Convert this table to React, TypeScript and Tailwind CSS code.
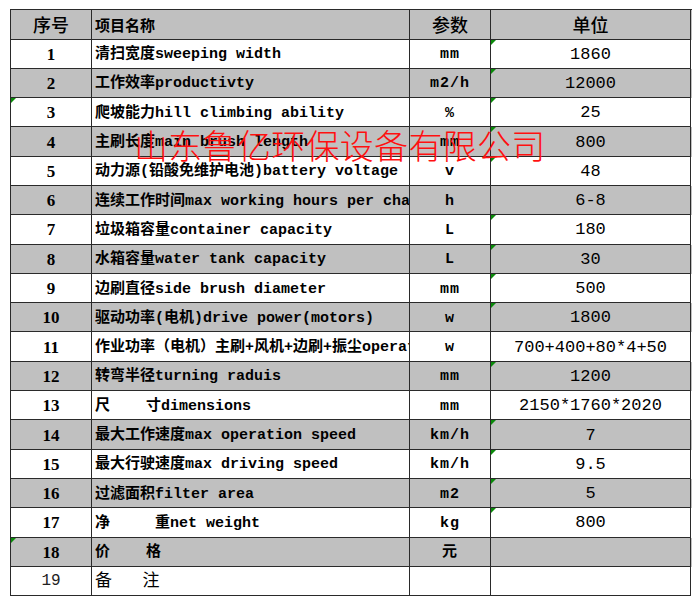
import React from "react";

type Row = {
  no: string;
  name: string;
  unit: string;
  value: string;
  markNo?: boolean;
  markValue?: boolean;
};

const rows: Row[] = [
  { no: "1", name: "清扫宽度sweeping width", unit: "mm", value: "1860", markValue: true },
  { no: "2", name: "工作效率productivty", unit: "m2/h", value: "12000", markValue: true },
  { no: "3", name: "爬坡能力hill climbing ability", unit: "%", value: "25", markNo: true, markValue: true },
  { no: "4", name: "主刷长度main brush length", unit: "mm", value: "800", markValue: true },
  { no: "5", name: "动力源(铅酸免维护电池)battery voltage", unit: "v", value: "48", markValue: true },
  { no: "6", name: "连续工作时间max working hours per charge", unit: "h", value: "6-8" },
  { no: "7", name: "垃圾箱容量container capacity", unit: "L", value: "180", markValue: true },
  { no: "8", name: "水箱容量water tank capacity", unit: "L", value: "30", markValue: true },
  { no: "9", name: "边刷直径side brush diameter", unit: "mm", value: "500", markValue: true },
  { no: "10", name: "驱动功率(电机)drive power(motors)", unit: "w", value: "1800", markValue: true },
  { no: "11", name: "作业功率（电机）主刷+风机+边刷+振尘operating power", unit: "w", value: "700+400+80*4+50" },
  { no: "12", name: "转弯半径turning raduis", unit: "mm", value: "1200", markValue: true },
  { no: "13", name: "尺    寸dimensions", unit: "mm", value: "2150*1760*2020" },
  { no: "14", name: "最大工作速度max operation speed", unit: "km/h", value: "7", markValue: true },
  { no: "15", name: "最大行驶速度max driving speed", unit: "km/h", value: "9.5", markValue: true },
  { no: "16", name: "过滤面积filter area", unit: "m2", value: "5", markValue: true },
  { no: "17", name: "净     重net weight", unit: "kg", value: "800", markValue: true },
  { no: "18", name: "价    格", unit: "元", value: "", markNo: true },
];

const mono = "font-['Liberation_Mono','Noto_Sans_CJK_SC',monospace]";
const cjk = "font-['Noto_Sans_CJK_SC','Liberation_Sans',sans-serif]";

function Mark() {
  return (
    <span className="absolute left-0 top-0 h-0 w-0 border-r-[5px] border-t-[5px] border-r-transparent border-t-[#0a8a0a]" />
  );
}

function Cell({
  children,
  className = "",
  mark,
}: {
  children?: React.ReactNode;
  className?: string;
  mark?: boolean;
}) {
  return (
    <div
      className={`relative flex items-center overflow-hidden whitespace-pre border-b border-r border-[#2a2a2a] leading-none ${className}`}
    >
      {mark && <Mark />}
      {children}
    </div>
  );
}

export default function App() {
  return (
    <div className="h-[605px] w-[700px] bg-white pl-[10px] pt-[9px] text-black">
      <div className="relative w-[682px] border-l border-t border-[#2a2a2a]">
        {/* header */}
        <div className="grid h-[29.5px] grid-cols-[81px_318px_81px_200px] bg-[#c0c0c0]">
          <Cell className={`justify-center text-[18px] font-medium ${cjk}`}>序号</Cell>
          <Cell className={`pl-[3px] text-[15px] font-bold ${cjk}`}>项目名称</Cell>
          <Cell className={`justify-center text-[18px] font-medium ${cjk}`}>参数</Cell>
          <Cell className={`justify-center text-[18px] font-medium ${cjk}`}>单位</Cell>
        </div>

        {rows.map((r, i) => (
          <div
            key={r.no}
            className={`grid h-[29.3px] grid-cols-[81px_318px_81px_200px] ${
              i % 2 === 1 ? "bg-[#c0c0c0]" : "bg-white"
            }`}
          >
            <Cell mark={r.markNo} className="justify-center pt-[1px] font-['Liberation_Serif',serif] text-[17px] font-bold">
              {r.no}
            </Cell>
            <Cell className={`pl-[3px] pt-[2px] text-[15px] font-bold ${mono}`}>{r.name}</Cell>
            <Cell className={`justify-center pt-[2px] text-[15px] font-bold tracking-[1px] ${mono}`}>{r.unit}</Cell>
            <Cell mark={r.markValue} className={`justify-center pt-[1px] text-[17px] ${mono}`}>
              {r.value}
            </Cell>
          </div>
        ))}

        {/* row 19 */}
        <div className="grid h-[29.3px] grid-cols-[81px_318px_81px_200px] bg-white">
          <Cell className={`justify-center pt-[1px] text-[16px] text-[#222] ${mono}`}>19</Cell>
          <Cell className={`pl-[3px] pt-[1px] text-[17px] ${mono}`}>{"备   注"}</Cell>
          <Cell />
          <Cell />
        </div>

        {/* watermark */}
        <div
          className={`pointer-events-none absolute left-[123px] top-[118px] whitespace-nowrap text-[34px] font-light leading-none tracking-[0.3px] text-[#ff1010] ${cjk}`}
        >
          山东鲁亿环保设备有限公司
        </div>
      </div>
    </div>
  );
}
